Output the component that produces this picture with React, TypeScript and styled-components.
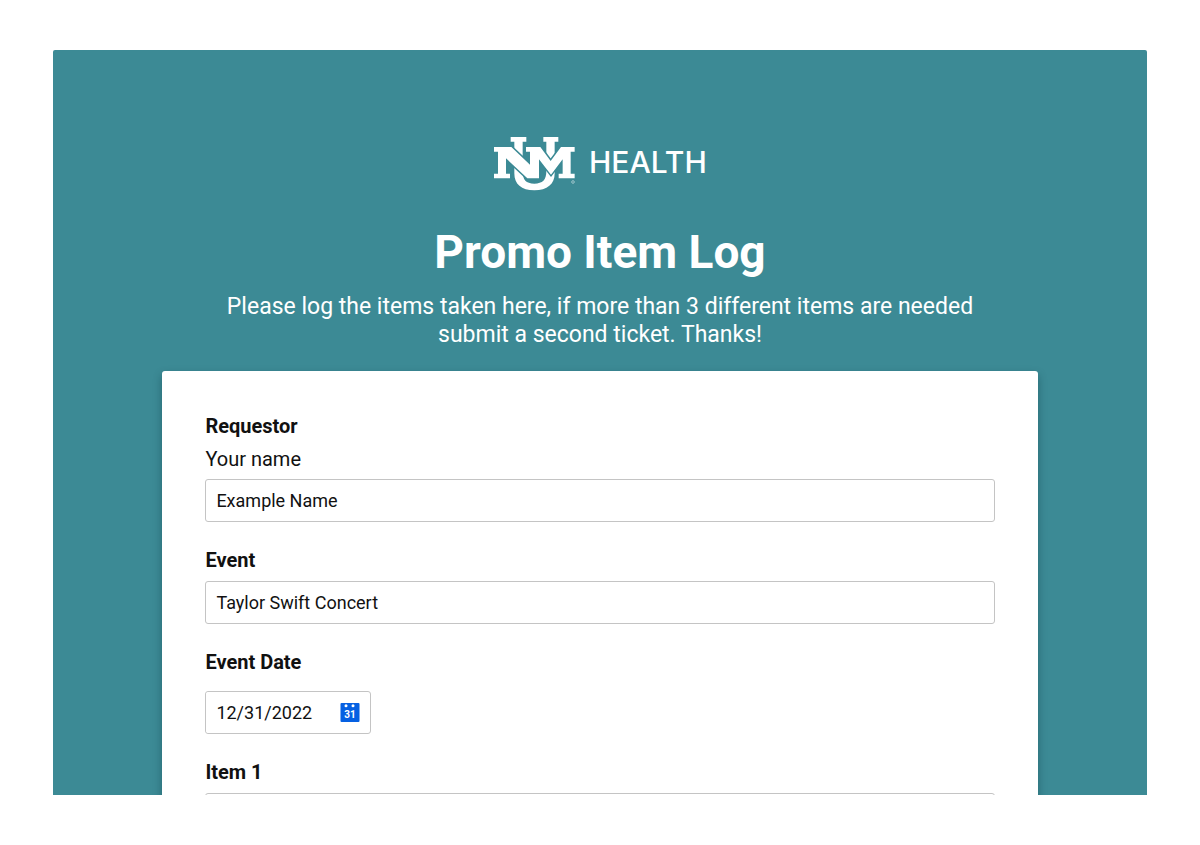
import React from 'react';
import styled, { createGlobalStyle } from 'styled-components';

const TEAL = '#3c8a95';

const GlobalStyle = createGlobalStyle`
  *, *::before, *::after { box-sizing: border-box; }
  body {
    margin: 0;
    background: #fff;
    color: #111;
    font-family: Roboto, "Liberation Sans", sans-serif;
  }
`;

const Page = styled.div`
  height: 100vh;
  padding: 50px 53px;
`;

const Panel = styled.main`
  height: 100%;
  overflow: hidden;
  padding: 84px 10% 0;
  border-radius: 2px 2px 0 0;
  background: ${TEAL};
`;

const Header = styled.header`
  display: flex;
  flex-direction: column;
  align-items: center;
  color: #fff;
  text-align: center;
`;

const Logo = styled.svg`
  display: block;
  width: 216px;
  height: 60px;
`;

const Title = styled.h1`
  margin: 30px 0 0;
  font-size: 46px;
  font-weight: 700;
  line-height: 56px;
`;

const Intro = styled.p`
  max-width: 800px;
  margin: 13px 0 0;
  font-size: 23px;
  line-height: 28px;
`;

const Card = styled.form`
  display: flex;
  flex-direction: column;
  gap: 25px;
  min-height: 800px;
  margin-top: 22px;
  padding: 42px 43px;
  border-radius: 3px;
  background: #fff;
  box-shadow: 0 4px 8px rgba(0, 50, 60, 0.4);
`;

const Field = styled.div<{ $gap?: number }>`
  display: flex;
  flex-direction: column;
  align-items: flex-start;
  gap: ${({ $gap = 8 }) => $gap}px;
`;

const Label = styled.label`
  font-size: 20px;
  font-weight: 700;
  line-height: 26px;
`;

const Hint = styled.span`
  font-size: 20px;
  line-height: 24px;
`;

const TextInput = styled.input`
  width: 100%;
  height: 43px;
  padding: 0 10px;
  border: 1px solid #c4c4c4;
  border-radius: 3px;
  background: #fff;
  color: #111;
  font-family: inherit;
  font-size: 18px;
`;

const DateBox = styled.div`
  display: flex;
  align-items: center;
  width: 166px;
  height: 43px;
  padding-right: 10px;
  border: 1px solid #c4c4c4;
  border-radius: 3px;
`;

const DateInput = styled(TextInput)`
  flex: 1;
  min-width: 0;
  height: 100%;
  padding-right: 0;
  border: 0;
`;

const CalendarButton = styled.button`
  display: flex;
  padding: 0;
  border: 0;
  background: none;
  cursor: pointer;
`;

function UnmHealthLogo() {
  return (
    <Logo viewBox="0 0 216 60" role="img" aria-label="UNM Health">
      <g transform="translate(-8 -4) scale(.3333)" fill="#fff">
        <path d="M80 21H127V35H116V124C116 150 126 161 151 161S187 150 187 124V35H178V21H223V35H212V130C212 163 190 181 151 181S91 163 91 130V35H80Z" />
        <path
          d="M30 51H82L138 104V65H126V51H169L200 93L231 51H272V65H260V131H272V145H224V131H236V88L201 134L165 88V145H130L66 85V131H78V145H30V131H42V65H30Z"
          stroke={TEAL}
          strokeWidth="9"
          paintOrder="stroke"
        />
        <circle cx="267" cy="156" r="4" fill="none" stroke="#fff" strokeWidth="2" opacity=".7" />
      </g>
      <text x="97" y="39" fill="#fff" fontFamily="Inter, sans-serif" fontSize="30" fontWeight="500">
        HEALTH
      </text>
    </Logo>
  );
}

function CalendarIcon() {
  return (
    <svg width="20" height="20" viewBox="0 0 20 20" aria-hidden="true">
      <rect width="19" height="19" x="0.5" y="0" rx="1" fill="#0560e2" />
      <circle cx="6" cy="2.7" r="1.5" fill="#fff" />
      <circle cx="13" cy="2.7" r="1.5" fill="#fff" />
      <text x="10" y="15" textAnchor="middle" fill="#fff" fontFamily="Roboto, sans-serif" fontSize="10" fontWeight="700">
        31
      </text>
    </svg>
  );
}

export default function App() {
  return (
    <>
      <GlobalStyle />
      <Page>
        <Panel>
          <Header>
            <UnmHealthLogo />
            <Title>Promo Item Log</Title>
            <Intro>
              Please log the items taken here, if more than 3 different items are needed submit a second ticket. Thanks!
            </Intro>
          </Header>
          <Card>
            <Field>
              <Label htmlFor="requestor">Requestor</Label>
              <Hint id="requestor-hint">Your name</Hint>
              <TextInput id="requestor" aria-describedby="requestor-hint" defaultValue="Example Name" />
            </Field>
            <Field>
              <Label htmlFor="event">Event</Label>
              <TextInput id="event" defaultValue="Taylor Swift Concert" />
            </Field>
            <Field $gap={16}>
              <Label htmlFor="event-date">Event Date</Label>
              <DateBox>
                <DateInput id="event-date" defaultValue="12/31/2022" />
                <CalendarButton type="button" aria-label="Choose a date">
                  <CalendarIcon />
                </CalendarButton>
              </DateBox>
            </Field>
            <Field>
              <Label htmlFor="item-1">Item 1</Label>
              <TextInput id="item-1" />
            </Field>
          </Card>
        </Panel>
      </Page>
    </>
  );
}
